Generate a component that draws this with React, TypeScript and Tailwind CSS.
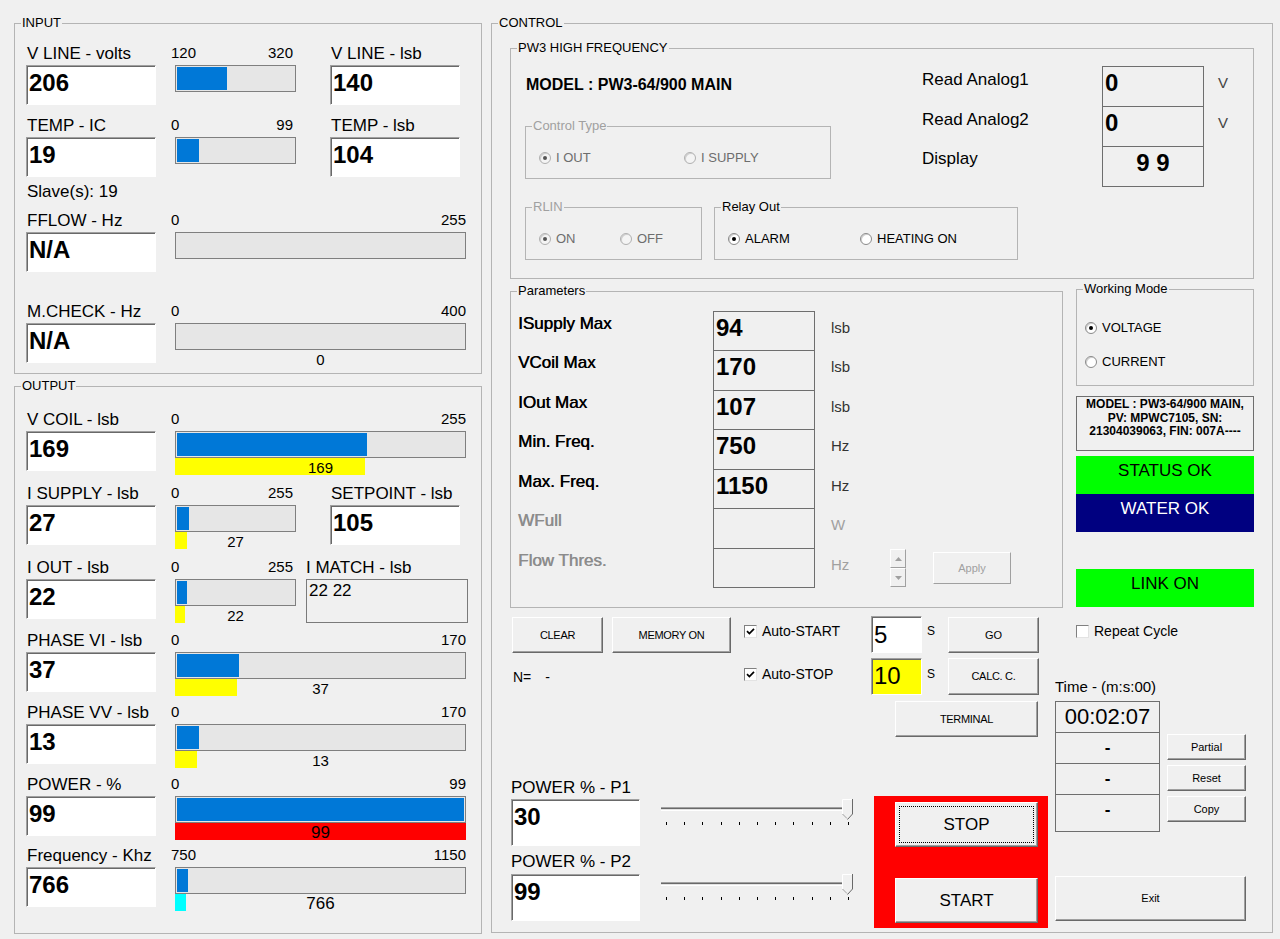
import type { ReactNode } from 'react';

// classic WinForms look: gray face, 3D borders
const GROUP_BORDER = 'border-[#b4b4b4]';

function Group({
  title,
  className = '',
  muted = false,
  children,
}: {
  title: string;
  className?: string;
  muted?: boolean;
  children?: ReactNode;
}) {
  return (
    <fieldset className={`border ${GROUP_BORDER} ${className}`}>
      <legend className={`ml-[6px] px-[1px] text-[13px] leading-[16px] ${muted ? 'text-[#a0a0a0]' : 'text-black'}`}>
        {title}
      </legend>
      {children}
    </fieldset>
  );
}

function TextBox({
  value,
  className = '',
  bold = true,
  pad = 'pt-[3px]',
  bg = 'bg-white',
}: {
  value: string;
  className?: string;
  bold?: boolean;
  pad?: string;
  bg?: string;
}) {
  return (
    <div
      className={`shrink-0 border border-t-[#a0a0a0] border-l-[#a0a0a0] border-r-white border-b-white shadow-[inset_1px_1px_0_#696969] pl-[2px] text-[24px] leading-[28px] ${bg} ${pad} ${bold ? 'font-bold' : ''} ${className}`}
    >
      {value}
    </div>
  );
}

function Field({ label, value, className = '' }: { label: string; value: string; className?: string }) {
  return (
    <div className={`w-[130px] shrink-0 ${className}`}>
      <div className="h-[22px] whitespace-nowrap pl-[1px] text-[17px] leading-[22px]">{label}</div>
      <TextBox value={value} className="h-[40px]" />
    </div>
  );
}

function Meter({
  min,
  max,
  value,
  wide = false,
  under,
  underFull = false,
  text,
  textClass = 'text-[15px]',
  className = '',
}: {
  min: number;
  max: number;
  value?: number;
  wide?: boolean;
  under?: string;
  underFull?: boolean;
  text?: string;
  textClass?: string;
  className?: string;
}) {
  const inner = wide ? 287 : 117;
  const fill = value === undefined ? 0 : Math.round(((value - min) / (max - min)) * inner);
  return (
    <div className={`${wide ? 'w-[291px]' : 'w-[121px]'} shrink-0 ${className}`}>
      <div className={`-ml-[4px] flex h-[22px] justify-between text-[15px] leading-[20px] ${wide ? '' : 'mr-[3px]'}`}>
        <span>{min}</span>
        <span>{max}</span>
      </div>
      <div className="h-[27px] border border-[#7f7f7f] bg-[#e6e6e6] p-[1px]">
        {fill > 0 && <div className="h-full bg-[#0078d7]" style={{ width: fill }} />}
      </div>
      {(under || text !== undefined) && (
        <div className="grid h-[20px]">
          {under && (
            <div className={`[grid-area:1/1] h-[17px] ${under}`} style={{ width: underFull ? '100%' : fill }} />
          )}
          {text !== undefined && (
            <div className={`[grid-area:1/1] text-center leading-[20px] ${textClass}`}>{text}</div>
          )}
        </div>
      )}
    </div>
  );
}

function Radio({ checked = false, disabled = false }: { checked?: boolean; disabled?: boolean }) {
  return (
    <span
      className={`flex h-[12px] w-[12px] shrink-0 items-center justify-center rounded-full border shadow-[inset_1px_1px_0_#cfcfcf] ${
        disabled ? 'border-[#b0b0b0] bg-[#f4f4f4]' : 'border-[#8a8a8a] bg-white'
      }`}
    >
      {checked && <span className={`h-[4px] w-[4px] rounded-full ${disabled ? 'bg-[#555]' : 'bg-black'}`} />}
    </span>
  );
}

function RadioItem({
  label,
  checked,
  disabled,
  className = '',
}: {
  label: string;
  checked?: boolean;
  disabled?: boolean;
  className?: string;
}) {
  return (
    <div className={`flex h-[16px] items-center ${className}`}>
      <Radio checked={checked} disabled={disabled} />
      <span className={`ml-[5px] whitespace-nowrap text-[13px] leading-[16px] ${disabled ? 'text-[#6d6d6d]' : 'text-black'}`}>
        {label}
      </span>
    </div>
  );
}

function Check({ checked = false }: { checked?: boolean }) {
  return (
    <span className="flex h-[13px] w-[13px] shrink-0 items-center justify-center border border-t-[#808080] border-l-[#808080] border-r-[#e3e3e3] border-b-[#e3e3e3] bg-white">
      {checked && (
        <svg width="9" height="9" viewBox="0 0 9 9">
          <path d="M1 4.2 L3.4 6.6 L8 1.8" stroke="#000" strokeWidth="1.7" fill="none" />
        </svg>
      )}
    </span>
  );
}

function Btn({
  children,
  className = '',
  disabled = false,
}: {
  children: ReactNode;
  className?: string;
  disabled?: boolean;
}) {
  return (
    <div
      className={`flex shrink-0 items-center justify-center border bg-[#f0f0f0] border-t-white border-l-white ${
        disabled
          ? 'border-r-[#a0a0a0] border-b-[#a0a0a0] text-[#a0a0a0]'
          : 'border-r-[#696969] border-b-[#696969] text-black shadow-[inset_-1px_-1px_0_#a0a0a0]'
      } ${className}`}
    >
      {children}
    </div>
  );
}

function Slider({ className = '' }: { className?: string }) {
  return (
    <div className={`w-[192px] shrink-0 ${className}`}>
      <div className="flex h-[21px] items-start">
        <div className="mt-[8px] h-[4px] w-[181px] border-t border-b border-t-[#a0a0a0] border-b-white bg-[#e3e3e3] shadow-[inset_0_1px_0_#696969]" />
        <svg width="11" height="21" viewBox="0 0 11 21">
          <path d="M0.5 0.5 H10.5 V15 L5.5 20.5 L0.5 15 Z" fill="#f0f0f0" />
          <path d="M0.5 15 V0.5 H10" stroke="#ffffff" fill="none" />
          <path d="M10.5 0 V15 L5.5 20.5" stroke="#696969" fill="none" />
          <path d="M0.5 15 L5 19.5" stroke="#a0a0a0" fill="none" />
        </svg>
      </div>
      <div className="mt-[2px] flex w-[188px] justify-between pl-[5px]">
        {Array.from({ length: 11 }).map((_, i) => (
          <span key={i} className="h-[3px] w-[1px] bg-black" />
        ))}
      </div>
    </div>
  );
}

function ParamRow({
  label,
  value,
  unit,
  h,
  disabled = false,
  last = false,
  extra,
}: {
  label: string;
  value: string;
  unit: string;
  h: string;
  disabled?: boolean;
  last?: boolean;
  extra?: ReactNode;
}) {
  return (
    <div className={`flex ${h}`}>
      <div
        className={`w-[202px] whitespace-nowrap pl-[7px] pt-[3px] text-[17px] leading-[20px] [text-shadow:0.5px_0_0_currentColor] ${
          disabled ? 'text-[#8c8c8c]' : 'text-black'
        }`}
      >
        {label}
      </div>
      <div
        className={`w-[102px] border-x border-t border-[#6e6e6e] pl-[2px] pt-[2px] text-[24px] font-bold leading-[28px] ${
          last ? 'border-b' : ''
        }`}
      >
        {value}
      </div>
      <div className={`w-[75px] pl-[16px] pt-[7px] text-[15px] leading-[20px] ${disabled ? 'text-[#a0a0a0]' : 'text-[#333]'}`}>
        {unit}
      </div>
      {extra}
    </div>
  );
}

function InputGroup() {
  return (
    <Group title="INPUT" className="h-[359px] w-[468px]">
      <div className="flex flex-col pt-[12px]">
        <div className="flex h-[72px] items-start">
          <Field label="V LINE - volts" value="206" className="ml-[11px]" />
          <Meter min={120} max={320} value={206} className="ml-[19px]" />
          <Field label="V LINE - lsb" value="140" className="ml-[34px]" />
        </div>
        <div className="flex h-[67px] items-start">
          <Field label="TEMP - IC" value="19" className="ml-[11px]" />
          <Meter min={0} max={99} value={19} className="ml-[19px]" />
          <Field label="TEMP - lsb" value="104" className="ml-[34px]" />
        </div>
        <div className="h-[20px] pl-[12px] text-[17px] leading-[20px]">Slave(s): 19</div>
        <div className="mt-[8px] flex h-[91px] items-start">
          <Field label="FFLOW - Hz" value="N/A" className="ml-[11px]" />
          <Meter min={0} max={255} wide className="ml-[19px]" />
        </div>
        <div className="flex h-[66px] items-start">
          <Field label="M.CHECK - Hz" value="N/A" className="ml-[11px]" />
          <Meter min={0} max={400} wide text="0" className="ml-[19px]" />
        </div>
      </div>
    </Group>
  );
}

function OutputGroup() {
  return (
    <Group title="OUTPUT" className="mt-[4px] h-[556px] w-[468px]">
      <div className="flex flex-col pt-[15px]">
        <div className="flex h-[74px] items-start">
          <Field label="V COIL - lsb" value="169" className="ml-[11px]" />
          <Meter min={0} max={255} value={169} wide under="bg-[#ffff00]" text="169" className="ml-[19px]" />
        </div>
        <div className="flex h-[74px] items-start">
          <Field label="I SUPPLY - lsb" value="27" className="ml-[11px]" />
          <Meter min={0} max={255} value={27} under="bg-[#ffff00]" text="27" className="ml-[19px]" />
          <Field label="SETPOINT - lsb" value="105" className="ml-[34px]" />
        </div>
        <div className="flex h-[73px] items-start">
          <Field label="I OUT - lsb" value="22" className="ml-[11px]" />
          <Meter min={0} max={255} value={22} under="bg-[#ffff00]" text="22" className="ml-[19px]" />
          <div className="ml-[10px] w-[162px] shrink-0">
            <div className="h-[22px] whitespace-nowrap text-[17px] leading-[22px]">I MATCH - lsb</div>
            <div className="h-[44px] border border-[#7a7a7a] pl-[2px] text-[17px] leading-[22px]">22 22</div>
          </div>
        </div>
        <div className="flex h-[72px] items-start">
          <Field label="PHASE VI - lsb" value="37" className="ml-[11px]" />
          <Meter min={0} max={170} value={37} wide under="bg-[#ffff00]" text="37" className="ml-[19px]" />
        </div>
        <div className="flex h-[72px] items-start">
          <Field label="PHASE VV - lsb" value="13" className="ml-[11px]" />
          <Meter min={0} max={170} value={13} wide under="bg-[#ffff00]" text="13" className="ml-[19px]" />
        </div>
        <div className="flex h-[71px] items-start">
          <Field label="POWER - %" value="99" className="ml-[11px]" />
          <Meter
            min={0}
            max={99}
            value={99}
            wide
            under="bg-[#ff0000]"
            underFull
            text="99"
            textClass="text-[17px]"
            className="ml-[19px]"
          />
        </div>
        <div className="flex h-[66px] items-start">
          <Field label="Frequency - Khz" value="766" className="ml-[11px]" />
          <Meter
            min={750}
            max={1150}
            value={766}
            wide
            under="bg-[#00ffff]"
            text="766"
            textClass="text-[17px]"
            className="ml-[19px]"
          />
        </div>
      </div>
    </Group>
  );
}

function Pw3Group() {
  return (
    <Group title="PW3 HIGH FREQUENCY" className="ml-[18px] mt-[9px] h-[239px] w-[744px]">
      <div className="flex flex-col">
        <div className="flex h-[130px]">
          <div className="flex w-[411px] flex-col">
            <div className="ml-[15px] mt-[19px] h-[20px] whitespace-nowrap text-[16px] font-bold leading-[20px]">
              MODEL : PW3-64/900 MAIN
            </div>
            <Group title="Control Type" muted className="ml-[14px] mt-[23px] h-[61px] w-[306px]">
              <div className="flex pl-[13px] pt-[16px]">
                <RadioItem label="I OUT" checked disabled className="w-[145px]" />
                <RadioItem label="I SUPPLY" disabled />
              </div>
            </Group>
          </div>
          <div className="mt-[10px] flex items-start">
            <div className="flex w-[180px] flex-col text-[17px] leading-[20px]">
              <div className="h-[40px] pt-[4px]">Read Analog1</div>
              <div className="h-[40px] pt-[4px]">Read Analog2</div>
              <div className="h-[40px] pt-[3px]">Display</div>
            </div>
            <div className="w-[102px] border border-[#6e6e6e] text-[24px] font-bold leading-[28px]">
              <div className="h-[39px] pl-[2px] pt-[2px]">0</div>
              <div className="h-[40px] border-t border-[#6e6e6e] pl-[2px] pt-[2px]">0</div>
              <div className="h-[40px] border-t border-[#6e6e6e] pt-[2px] text-center">9 9</div>
            </div>
            <div className="flex flex-col pl-[14px] text-[15px] leading-[20px] text-[#444]">
              <div className="h-[40px] pt-[7px]">V</div>
              <div className="h-[40px] pt-[7px]">V</div>
            </div>
          </div>
        </div>
        <div className="mt-[13px] flex">
          <Group title="RLIN" muted className="ml-[14px] h-[61px] w-[177px]">
            <div className="flex pl-[13px] pt-[16px]">
              <RadioItem label="ON" checked disabled className="w-[81px]" />
              <RadioItem label="OFF" disabled />
            </div>
          </Group>
          <Group title="Relay Out" className="ml-[12px] h-[61px] w-[304px]">
            <div className="flex pl-[13px] pt-[16px]">
              <RadioItem label="ALARM" checked className="w-[132px]" />
              <RadioItem label="HEATING ON" />
            </div>
          </Group>
        </div>
      </div>
    </Group>
  );
}

function ParametersGroup() {
  return (
    <Group title="Parameters" className="ml-[18px] mt-[2px] h-[325px] w-[553px]">
      <div className="flex flex-col pt-[12px]">
        <ParamRow label="ISupply Max" value="94" unit="lsb" h="h-[39px]" />
        <ParamRow label="VCoil Max" value="170" unit="lsb" h="h-[40px]" />
        <ParamRow label="IOut Max" value="107" unit="lsb" h="h-[39px]" />
        <ParamRow label="Min. Freq." value="750" unit="Hz" h="h-[40px]" />
        <ParamRow label="Max. Freq." value="1150" unit="Hz" h="h-[39px]" />
        <ParamRow label="WFull" value="" unit="W" h="h-[40px]" disabled />
        <ParamRow
          label="Flow Thres."
          value=""
          unit="Hz"
          h="h-[40px]"
          disabled
          last
          extra={
            <>
              <div className="mt-[1px] flex h-[39px] w-[16px] flex-col">
                {[true, false].map((up) => (
                  <div
                    key={String(up)}
                    className="flex h-[19px] items-center justify-center border border-t-white border-l-white border-r-[#a0a0a0] border-b-[#a0a0a0] bg-[#f0f0f0]"
                  >
                    <svg width="7" height="4" viewBox="0 0 7 4">
                      <path d={up ? 'M0 4 L3.5 0 L7 4 Z' : 'M0 0 L3.5 4 L7 0 Z'} fill="#a0a0a0" />
                    </svg>
                  </div>
                ))}
              </div>
              <Btn disabled className="ml-[27px] mt-[4px] h-[32px] w-[78px] text-[11px]">
                Apply
              </Btn>
            </>
          }
        />
      </div>
    </Group>
  );
}

function StatusColumn() {
  return (
    <div className="ml-[13px] flex w-[178px] flex-col">
      <Group title="Working Mode" className="h-[105px] w-[178px]">
        <div className="flex flex-col pl-[8px] pt-[23px]">
          <RadioItem label="VOLTAGE" checked />
          <RadioItem label="CURRENT" className="mt-[18px]" />
        </div>
      </Group>
      <div className="mt-[10px] h-[55px] border border-[#6e6e6e] pt-[1px] text-center text-[12px] font-bold leading-[13.5px]">
        MODEL : PW3-64/900 MAIN,
        <br />
        PV: MPWC7105, SN:
        <br />
        21304039063, FIN: 007A----
      </div>
      <div className="mt-[5px] h-[38px] bg-[#00ff00] pt-[5px] text-center text-[17px] leading-[20px]">STATUS OK</div>
      <div className="h-[38px] bg-[#000080] pt-[5px] text-center text-[17px] leading-[20px] text-white">WATER OK</div>
      <div className="mt-[37px] h-[38px] bg-[#00ff00] pt-[5px] text-center text-[17px] leading-[20px]">LINK ON</div>
    </div>
  );
}

function LowerLeft() {
  return (
    <div className="flex w-[563px] flex-col">
      <div className="mt-[9px] flex h-[37px] items-start">
        <Btn className="ml-[20px] h-[36px] w-[91px] text-[11px] tracking-[-0.3px]">CLEAR</Btn>
        <Btn className="ml-[9px] h-[36px] w-[119px] text-[11px] tracking-[-0.3px]">MEMORY ON</Btn>
        <div className="ml-[13px] flex h-[28px] w-[127px] items-center">
          <Check checked />
          <span className="ml-[5px] text-[14px] leading-[16px]">Auto-START</span>
        </div>
        <TextBox value="5" bold={false} pad="pt-[4px]" className="-mt-[1px] h-[37px] w-[51px]" />
        <div className="w-[26px] pl-[5px] pt-[6px] text-[12px] leading-[16px]">S</div>
        <Btn className="h-[36px] w-[91px] text-[11px]">GO</Btn>
      </div>
      <div className="mt-[4px] flex h-[37px] items-start">
        <div className="ml-[21px] w-[231px] pt-[9px] text-[14px] leading-[20px]">
          N=<span className="ml-[14px]">-</span>
        </div>
        <div className="flex h-[32px] w-[127px] items-center">
          <Check checked />
          <span className="ml-[5px] text-[14px] leading-[16px]">Auto-STOP</span>
        </div>
        <TextBox value="10" bold={false} bg="bg-[#ffff00]" className="h-[37px] w-[51px]" />
        <div className="w-[26px] pl-[5px] pt-[8px] text-[12px] leading-[16px]">S</div>
        <Btn className="h-[37px] w-[91px] text-[11px] tracking-[-0.3px]">CALC. C.</Btn>
      </div>
      <div className="mt-[6px] flex">
        <Btn className="ml-[403px] h-[36px] w-[143px] text-[11px] tracking-[-0.3px]">TERMINAL</Btn>
      </div>
      <div className="mt-[41px] flex items-start">
        <div className="ml-[19px] flex flex-col">
          <div className="h-[20px] whitespace-nowrap text-[17px] leading-[20px]">POWER % - P1</div>
          <div className="mt-[1px] flex items-start">
            <TextBox value="30" className="h-[47px] w-[129px]" />
            <Slider className="ml-[21px]" />
          </div>
          <div className="mt-[6px] h-[20px] whitespace-nowrap text-[17px] leading-[20px]">POWER % - P2</div>
          <div className="mt-[2px] flex items-start">
            <TextBox value="99" className="h-[47px] w-[129px]" />
            <Slider className="ml-[21px]" />
          </div>
        </div>
        <div className="ml-[21px] mt-[18px] flex h-[132px] w-[174px] flex-col bg-[#ff0000] pl-[21px] pt-[6px]">
          <Btn className="h-[45px] w-[143px] border-b-[#404040] border-r-[#404040]">
            <div className="m-[3px] flex flex-1 self-stretch items-center justify-center border border-dotted border-black text-[17px]">
              STOP
            </div>
          </Btn>
          <Btn className="mt-[31px] h-[45px] w-[143px] text-[17px]">START</Btn>
        </div>
      </div>
    </div>
  );
}

function LowerRight() {
  return (
    <div className="flex flex-col">
      <div className="ml-[21px] mt-[15px] flex h-[16px] items-center">
        <Check />
        <span className="ml-[5px] text-[14px] leading-[16px]">Repeat Cycle</span>
      </div>
      <div className="mt-[38px] h-[20px] whitespace-nowrap text-[15px] leading-[20px]">Time - (m:s:00)</div>
      <div className="mt-[4px] flex items-start">
        <div className="w-[105px] border border-[#6e6e6e] text-center">
          <div className="h-[30px] text-[22px] leading-[30px]">00:02:07</div>
          <div className="h-[31px] border-t border-[#6e6e6e] text-[17px] font-bold leading-[30px]">-</div>
          <div className="h-[31px] border-t border-[#6e6e6e] text-[17px] font-bold leading-[30px]">-</div>
          <div className="h-[37px] border-t border-[#6e6e6e] text-[17px] font-bold leading-[30px]">-</div>
        </div>
        <div className="ml-[7px] flex w-[79px] flex-col pt-[33px]">
          <Btn className="h-[26px] w-[79px] text-[11px]">Partial</Btn>
          <Btn className="mt-[5px] h-[26px] w-[79px] text-[11px]">Reset</Btn>
          <Btn className="mt-[5px] h-[26px] w-[79px] text-[11px]">Copy</Btn>
        </div>
      </div>
      <Btn className="mt-[44px] h-[45px] w-[191px] text-[11px]">Exit</Btn>
    </div>
  );
}

function ControlGroup() {
  return (
    <Group title="CONTROL" className="ml-[9px] h-[918px] w-[782px]">
      <div className="flex flex-col">
        <Pw3Group />
        <div className="mt-[2px] flex items-start">
          <ParametersGroup />
          <StatusColumn />
        </div>
        <div className="flex">
          <LowerLeft />
          <LowerRight />
        </div>
      </div>
    </Group>
  );
}

export default function App() {
  return (
    <div className="flex h-[939px] w-[1280px] items-start overflow-hidden bg-[#f0f0f0] pl-[14px] pt-[15px] font-['Liberation_Sans',Arial,sans-serif] text-black">
      <div className="flex w-[468px] shrink-0 flex-col">
        <InputGroup />
        <OutputGroup />
      </div>
      <ControlGroup />
    </div>
  );
}
